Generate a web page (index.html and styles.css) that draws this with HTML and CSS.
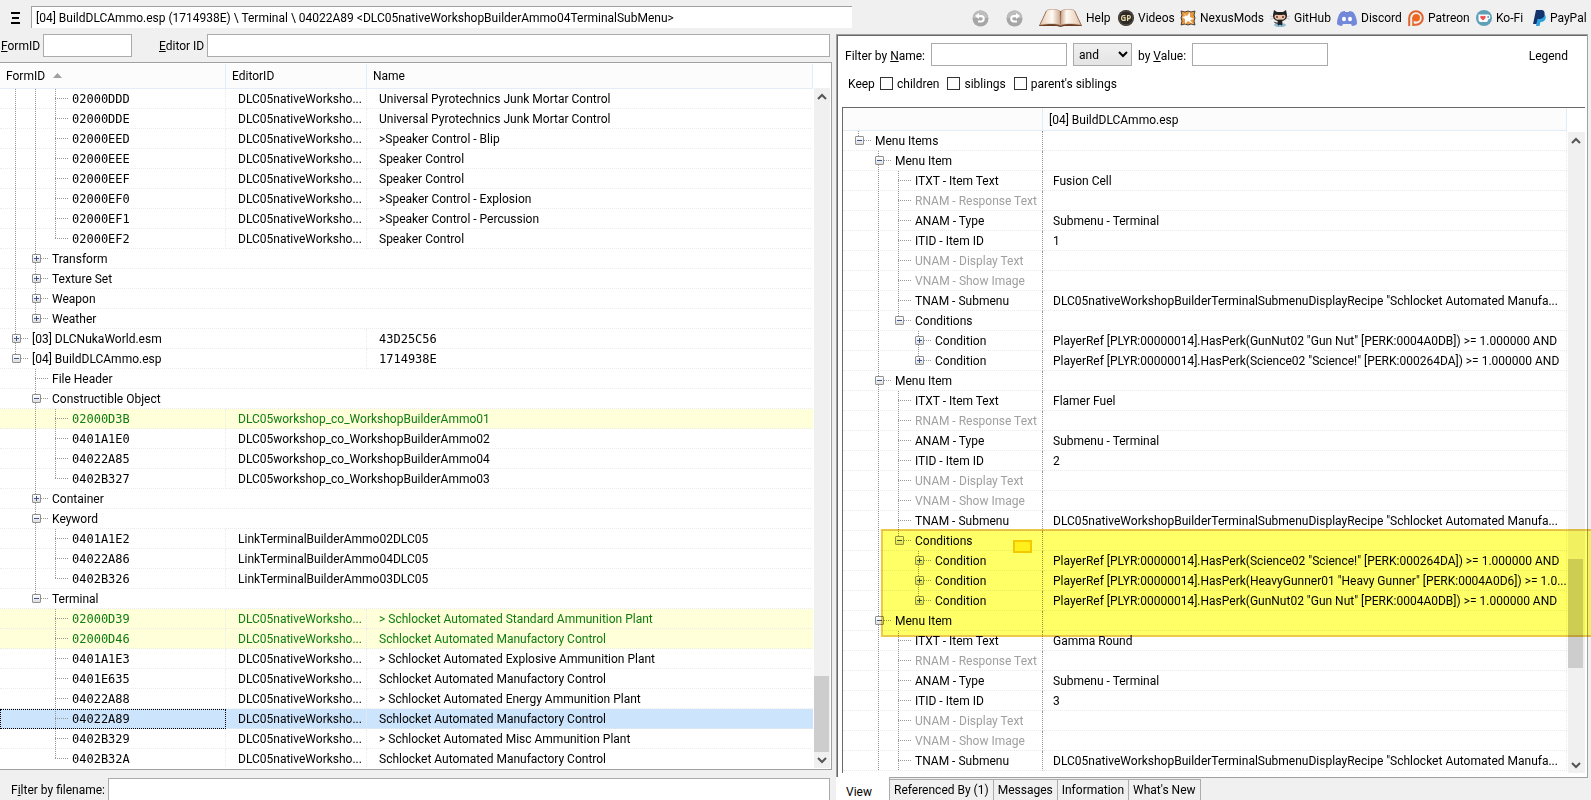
FILE: index.html
```html
<!DOCTYPE html>
<html lang="en">
<head>
<meta charset="utf-8">
<title>BuildDLCAmmo.esp</title>
<link rel="stylesheet" href="styles.css">
</head>
<body>
<header class="toolbar">
  <button class="menu" aria-label="Menu"><svg width="10" height="14" viewBox="0 0 10 14"><path d="M0 1h9v2H0zM1 6h7v2H1zM0 11h9v2H0z"/></svg></button>
  <input class="path" aria-label="Path" value="[04] BuildDLCAmmo.esp (1714938E) \ Terminal \ 04022A89 &lt;DLC05nativeWorkshopBuilderAmmo04TerminalSubMenu&gt;">
  <nav class="links">
    <button aria-label="Back"><svg width="17" height="17" viewBox="0 0 17 17"><circle cx="8.500" cy="8.500" r="8" fill="#a6a6a6"/><path d="M1 8a7.500 7.500 0 0 1 15 0z" fill="#bdbdbd"/><path d="M6 6h3a2.700 2.700 0 0 1 0 5.500H6" fill="none" stroke="#fff" stroke-width="2"/><path d="M3 6l4-3v6z" fill="#fff"/></svg></button>
    <button aria-label="Forward"><svg width="17" height="17" viewBox="0 0 17 17"><circle cx="8.500" cy="8.500" r="8" fill="#a6a6a6"/><path d="M1 8a7.500 7.500 0 0 1 15 0z" fill="#bdbdbd"/><path d="M11 6H8a2.700 2.700 0 0 0 0 5.500h3" fill="none" stroke="#fff" stroke-width="2"/><path d="M14 6l-4-3v6z" fill="#fff"/></svg></button>
    <a href="#help"><svg width="43" height="18" viewBox="0 0 43 18"><defs><linearGradient id="pl"><stop offset="0" stop-color="#e5cbb5"/><stop offset=".6" stop-color="#fffaf4"/><stop offset="1" stop-color="#c9a58a"/></linearGradient><linearGradient id="pr"><stop offset="0" stop-color="#c9a58a"/><stop offset=".3" stop-color="#fffaf4"/><stop offset="1" stop-color="#e2c4aa"/></linearGradient></defs><path d="M7 2L0 17h18l3.500 1L25 17h18L36 2l-3 0H10z" fill="#6b3c22"/><path d="M8 1C13 0 18 0 21 2l.5 14.500C16 14 8 15 1 16z" fill="url(#pl)" stroke="#a67c5e" stroke-width=".5"/><path d="M35 1C30 0 25 0 22 2l-.5 14.500C27 14 35 15 42 16z" fill="url(#pr)" stroke="#a67c5e" stroke-width=".5"/></svg>Help</a>
    <a href="#videos"><svg width="16" height="16" viewBox="0 0 16 16"><circle cx="8" cy="8" r="8" fill="#2d2926"/><circle cx="8" cy="8" r="7" fill="none" stroke="#5b5148"/><text x="8" y="11" text-anchor="middle" class="gp">GP</text></svg>Videos</a>
    <a href="#nexus"><svg width="16" height="16" viewBox="0 0 16 16"><path d="M1 1l4 1 3-1 3 1 4-1-1 4 1 3-1 3 1 4-4-1-3 1-3-1-4 1 1-4-1-3 1-3z" fill="#e99a40" stroke="#4a4038" stroke-width="1"/><path d="M3 3l4 3 3-4 0 5 4 2-4 1 3 4-5-3-3 3 0-5-3-2 4-1z" fill="#fff"/></svg>NexusMods</a>
    <a href="#github"><svg width="20" height="17" viewBox="0 0 20 17"><ellipse cx="10" cy="15" rx="6" ry="2" fill="#8fbdd0"/><path d="M0 6l5 1M0 9l5-1M20 6l-5 1M20 9l-5-1" stroke="#b9b9b9" stroke-width=".7"/><path d="M4 0l3 2h6l3-2 1 5c0 4-2 6-7 6S3 9 3 5z" fill="#222"/><path d="M4.500 6C5 4 8 5 10 5s5-1 5.500 1c0 3-2 4-5.500 4S4.500 9 4.500 6z" fill="#eec1a7"/><path d="M7 6v2M13 6v2" stroke="#633" stroke-width="1.500"/><path d="M8 10h4v5h-1l-1-1-1 1H8zM8 13c-3 1-3-1-4-1" fill="#222" stroke="#222" stroke-width=".7"/></svg>GitHub</a>
    <a href="#discord"><svg width="20" height="16" viewBox="0 0 20 16"><path d="M4 2C6 1 7 1 8 1v1h4V1c1 0 2 0 4 1 3 3 4 8 4 12-1 1-3 2-5 2l-1-2H6l-1 2c-2 0-4-1-5-2C0 10 1 5 4 2z" fill="#7289da"/><ellipse cx="7" cy="9" rx="2" ry="2.200" fill="#fff"/><ellipse cx="13" cy="9" rx="2" ry="2.200" fill="#fff"/></svg>Discord</a>
    <a href="#patreon"><svg width="16" height="16" viewBox="0 0 16 16"><path d="M1.200 16V8a6.800 6.800 0 1 1 6.800 6.800H5" fill="none" stroke="#e0642b" stroke-width="2"/><circle cx="8.300" cy="7.700" r="3.700" fill="#f1661d"/><path d="M5 7v9" stroke="#e0642b" stroke-width="1.500"/></svg>Patreon</a>
    <a href="#kofi"><svg width="16" height="16" viewBox="0 0 16 16"><circle cx="8" cy="8" r="8" fill="#5f9fb8"/><path d="M2.500 4.500H12c3 0 3 5 0 5 0 2-1 2.500-2 2.500H5c-2 0-2.500-1-2.500-3z" fill="#fff"/><circle cx="12.200" cy="7" r="1" fill="#5f9fb8"/><path d="M7 10.500L4.500 8C3.500 6 6 5 7 6.500 8 5 10.500 6 9.500 8z" fill="#f0504d"/></svg>Ko-Fi</a>
    <a href="#paypal"><svg width="13" height="16" viewBox="0 0 13 16"><path d="M5 4h6c2 1 2 3 1.500 5-1 2-2 3-5 3l-1 4H3z" fill="#2aa1dc"/><path d="M3 0h5c3 0 4 2 3.500 4.500C11 8 9 9 6 9H4.500L3.500 14H0z" fill="#14346f"/></svg>PayPal</a>
  </nav>
</header>
<main class="workspace">
<section class="left">
  <form class="ids">
    <label for="formid"><u>F</u>ormID</label><input id="formid">
    <label for="edid" class="edid"><u>E</u>ditor ID</label><input id="edid">
  </form>
  <div class="frame records">
    <div class="view">
      <table>
        <colgroup><col class="c-id"><col class="c-ed"><col></colgroup>
        <thead><tr><th>FormID<svg class="sort" width="9" height="5" viewBox="0 0 9 5"><path d="M0 5l4.500-5L9 5z"/></svg></th><th>EditorID</th><th>Name</th></tr></thead>
        <tbody>
        <tr><td><div class="tree id"><i class="g"></i><i class="g"></i><i class="t"></i>02000DDD</div></td><td>DLC05nativeWorksho...</td><td>Universal Pyrotechnics Junk Mortar Control</td></tr>
        <tr><td><div class="tree id"><i class="g"></i><i class="g"></i><i class="t"></i>02000DDE</div></td><td>DLC05nativeWorksho...</td><td>Universal Pyrotechnics Junk Mortar Control</td></tr>
        <tr><td><div class="tree id"><i class="g"></i><i class="g"></i><i class="t"></i>02000EED</div></td><td>DLC05nativeWorksho...</td><td>&gt;Speaker Control - Blip</td></tr>
        <tr><td><div class="tree id"><i class="g"></i><i class="g"></i><i class="t"></i>02000EEE</div></td><td>DLC05nativeWorksho...</td><td>Speaker Control</td></tr>
        <tr><td><div class="tree id"><i class="g"></i><i class="g"></i><i class="t"></i>02000EEF</div></td><td>DLC05nativeWorksho...</td><td>Speaker Control</td></tr>
        <tr><td><div class="tree id"><i class="g"></i><i class="g"></i><i class="t"></i>02000EF0</div></td><td>DLC05nativeWorksho...</td><td>&gt;Speaker Control - Explosion</td></tr>
        <tr><td><div class="tree id"><i class="g"></i><i class="g"></i><i class="t"></i>02000EF1</div></td><td>DLC05nativeWorksho...</td><td>&gt;Speaker Control - Percussion</td></tr>
        <tr><td><div class="tree id"><i class="g"></i><i class="g"></i><i class="t l"></i>02000EF2</div></td><td>DLC05nativeWorksho...</td><td>Speaker Control</td></tr>
        <tr><td colspan="3"><div class="tree"><i class="g"></i><i class="t"><button class="plus" aria-label="Expand"></button></i>Transform</div></td></tr>
        <tr><td colspan="3"><div class="tree"><i class="g"></i><i class="t"><button class="plus" aria-label="Expand"></button></i>Texture Set</div></td></tr>
        <tr><td colspan="3"><div class="tree"><i class="g"></i><i class="t"><button class="plus" aria-label="Expand"></button></i>Weapon</div></td></tr>
        <tr><td colspan="3"><div class="tree"><i class="g"></i><i class="t l"><button class="plus" aria-label="Expand"></button></i>Weather</div></td></tr>
        <tr><td colspan="2"><div class="tree"><i class="t"><button class="plus" aria-label="Expand"></button></i>[03] DLCNukaWorld.esm</div></td><td class="id">43D25C56</td></tr>
        <tr><td colspan="2"><div class="tree"><i class="t l"><button class="minus" aria-label="Collapse"></button></i>[04] BuildDLCAmmo.esp</div></td><td class="id">1714938E</td></tr>
        <tr><td colspan="3"><div class="tree"><i></i><i class="t"></i>File Header</div></td></tr>
        <tr><td colspan="3"><div class="tree"><i></i><i class="t"><button class="minus" aria-label="Collapse"></button></i>Constructible Object</div></td></tr>
        <tr class="changed"><td><div class="tree id"><i></i><i class="g"></i><i class="t"></i>02000D3B</div></td><td colspan="2">DLC05workshop_co_WorkshopBuilderAmmo01</td></tr>
        <tr><td><div class="tree id"><i></i><i class="g"></i><i class="t"></i>0401A1E0</div></td><td colspan="2">DLC05workshop_co_WorkshopBuilderAmmo02</td></tr>
        <tr><td><div class="tree id"><i></i><i class="g"></i><i class="t"></i>04022A85</div></td><td colspan="2">DLC05workshop_co_WorkshopBuilderAmmo04</td></tr>
        <tr><td><div class="tree id"><i></i><i class="g"></i><i class="t l"></i>0402B327</div></td><td colspan="2">DLC05workshop_co_WorkshopBuilderAmmo03</td></tr>
        <tr><td colspan="3"><div class="tree"><i></i><i class="t"><button class="plus" aria-label="Expand"></button></i>Container</div></td></tr>
        <tr><td colspan="3"><div class="tree"><i></i><i class="t"><button class="minus" aria-label="Collapse"></button></i>Keyword</div></td></tr>
        <tr><td><div class="tree id"><i></i><i class="g"></i><i class="t"></i>0401A1E2</div></td><td colspan="2">LinkTerminalBuilderAmmo02DLC05</td></tr>
        <tr><td><div class="tree id"><i></i><i class="g"></i><i class="t"></i>04022A86</div></td><td colspan="2">LinkTerminalBuilderAmmo04DLC05</td></tr>
        <tr><td><div class="tree id"><i></i><i class="g"></i><i class="t l"></i>0402B326</div></td><td colspan="2">LinkTerminalBuilderAmmo03DLC05</td></tr>
        <tr><td colspan="3"><div class="tree"><i></i><i class="t l"><button class="minus" aria-label="Collapse"></button></i>Terminal</div></td></tr>
        <tr class="changed"><td><div class="tree id"><i></i><i></i><i class="t"></i>02000D39</div></td><td>DLC05nativeWorksho...</td><td>&gt; Schlocket Automated Standard Ammunition Plant</td></tr>
        <tr class="changed"><td><div class="tree id"><i></i><i></i><i class="t"></i>02000D46</div></td><td>DLC05nativeWorksho...</td><td>Schlocket Automated Manufactory Control</td></tr>
        <tr><td><div class="tree id"><i></i><i></i><i class="t"></i>0401A1E3</div></td><td>DLC05nativeWorksho...</td><td>&gt; Schlocket Automated Explosive Ammunition Plant</td></tr>
        <tr><td><div class="tree id"><i></i><i></i><i class="t"></i>0401E635</div></td><td>DLC05nativeWorksho...</td><td>Schlocket Automated Manufactory Control</td></tr>
        <tr><td><div class="tree id"><i></i><i></i><i class="t"></i>04022A88</div></td><td>DLC05nativeWorksho...</td><td>&gt; Schlocket Automated Energy Ammunition Plant</td></tr>
        <tr class="selected"><td><div class="tree id"><i></i><i></i><i class="t"></i>04022A89</div></td><td>DLC05nativeWorksho...</td><td>Schlocket Automated Manufactory Control</td></tr>
        <tr><td><div class="tree id"><i></i><i></i><i class="t"></i>0402B329</div></td><td>DLC05nativeWorksho...</td><td>&gt; Schlocket Automated Misc Ammunition Plant</td></tr>
        <tr><td><div class="tree id"><i></i><i></i><i class="t l"></i>0402B32A</div></td><td>DLC05nativeWorksho...</td><td>Schlocket Automated Manufactory Control</td></tr>
        </tbody>
      </table>
    </div>
    <div class="scroll">
      <svg width="16" height="20" viewBox="0 0 16 20"><path d="M4 11l4-4 4 4"/></svg>
      <div class="track"><div class="before"></div><div class="thumb"></div><div class="after"></div></div>
      <svg width="16" height="16" viewBox="0 0 16 16"><path d="M4 6l4 4 4-4"/></svg>
    </div>
  </div>
  <form class="filename">
    <label for="fname">F<u>i</u>lter by filename:</label><input id="fname">
  </form>
</section>
<section class="right">
  <div class="panel">
    <form class="filters">
      <div class="line">
        <label for="byname">Filter by <u>N</u>ame:</label><input id="byname">
        <select aria-label="Operator"><option>and</option></select>
        <label for="byvalue" class="val">by <u>V</u>alue:</label><input id="byvalue">
        <span class="legend">Legend</span>
      </div>
      <div class="keep">
        <span>Keep</span>
        <label><input type="checkbox">children</label>
        <label><input type="checkbox">siblings</label>
        <label><input type="checkbox">parent's siblings</label>
      </div>
    </form>
    <div class="frame fields">
      <div class="view">
        <table>
          <colgroup><col class="c-field"><col></colgroup>
          <thead><tr><th></th><th>[04] BuildDLCAmmo.esp</th></tr></thead>
          <tbody>
          <tr><td><div class="tree"><i class="t l"><button class="minus" aria-label="Collapse"></button></i>Menu Items</div></td><td></td></tr>
          <tr><td><div class="tree"><i></i><i class="t"><button class="minus" aria-label="Collapse"></button></i>Menu Item</div></td><td></td></tr>
          <tr><td><div class="tree"><i></i><i class="g"></i><i class="t"></i>ITXT - Item Text</div></td><td>Fusion Cell</td></tr>
          <tr class="unset"><td><div class="tree"><i></i><i class="g"></i><i class="t"></i>RNAM - Response Text</div></td><td></td></tr>
          <tr><td><div class="tree"><i></i><i class="g"></i><i class="t"></i>ANAM - Type</div></td><td>Submenu - Terminal</td></tr>
          <tr><td><div class="tree"><i></i><i class="g"></i><i class="t"></i>ITID - Item ID</div></td><td>1</td></tr>
          <tr class="unset"><td><div class="tree"><i></i><i class="g"></i><i class="t"></i>UNAM - Display Text</div></td><td></td></tr>
          <tr class="unset"><td><div class="tree"><i></i><i class="g"></i><i class="t"></i>VNAM - Show Image</div></td><td></td></tr>
          <tr><td><div class="tree"><i></i><i class="g"></i><i class="t"></i>TNAM - Submenu</div></td><td>DLC05nativeWorkshopBuilderTerminalSubmenuDisplayRecipe "Schlocket Automated Manufa...</td></tr>
          <tr><td><div class="tree"><i></i><i class="g"></i><i class="t l"><button class="minus" aria-label="Collapse"></button></i>Conditions</div></td><td></td></tr>
          <tr><td><div class="tree"><i></i><i class="g"></i><i></i><i class="t"><button class="plus" aria-label="Expand"></button></i>Condition</div></td><td>PlayerRef [PLYR:00000014].HasPerk(GunNut02 "Gun Nut" [PERK:0004A0DB]) &gt;= 1.000000 AND</td></tr>
          <tr><td><div class="tree"><i></i><i class="g"></i><i></i><i class="t l"><button class="plus" aria-label="Expand"></button></i>Condition</div></td><td>PlayerRef [PLYR:00000014].HasPerk(Science02 "Science!" [PERK:000264DA]) &gt;= 1.000000 AND</td></tr>
          <tr><td><div class="tree"><i></i><i class="t"><button class="minus" aria-label="Collapse"></button></i>Menu Item</div></td><td></td></tr>
          <tr><td><div class="tree"><i></i><i class="g"></i><i class="t"></i>ITXT - Item Text</div></td><td>Flamer Fuel</td></tr>
          <tr class="unset"><td><div class="tree"><i></i><i class="g"></i><i class="t"></i>RNAM - Response Text</div></td><td></td></tr>
          <tr><td><div class="tree"><i></i><i class="g"></i><i class="t"></i>ANAM - Type</div></td><td>Submenu - Terminal</td></tr>
          <tr><td><div class="tree"><i></i><i class="g"></i><i class="t"></i>ITID - Item ID</div></td><td>2</td></tr>
          <tr class="unset"><td><div class="tree"><i></i><i class="g"></i><i class="t"></i>UNAM - Display Text</div></td><td></td></tr>
          <tr class="unset"><td><div class="tree"><i></i><i class="g"></i><i class="t"></i>VNAM - Show Image</div></td><td></td></tr>
          <tr><td><div class="tree"><i></i><i class="g"></i><i class="t"></i>TNAM - Submenu</div></td><td>DLC05nativeWorkshopBuilderTerminalSubmenuDisplayRecipe "Schlocket Automated Manufa...</td></tr>
          <tr><td><div class="tree"><i></i><i class="g"></i><i class="t l"><button class="minus" aria-label="Collapse"></button></i>Conditions</div></td><td></td></tr>
          <tr><td><div class="tree"><i></i><i class="g"></i><i></i><i class="t"><button class="plus" aria-label="Expand"></button></i>Condition</div></td><td>PlayerRef [PLYR:00000014].HasPerk(Science02 "Science!" [PERK:000264DA]) &gt;= 1.000000 AND</td></tr>
          <tr><td><div class="tree"><i></i><i class="g"></i><i></i><i class="t"><button class="plus" aria-label="Expand"></button></i>Condition</div></td><td>PlayerRef [PLYR:00000014].HasPerk(HeavyGunner01 "Heavy Gunner" [PERK:0004A0D6]) &gt;= 1.0...</td></tr>
          <tr><td><div class="tree"><i></i><i class="g"></i><i></i><i class="t l"><button class="plus" aria-label="Expand"></button></i>Condition</div></td><td>PlayerRef [PLYR:00000014].HasPerk(GunNut02 "Gun Nut" [PERK:0004A0DB]) &gt;= 1.000000 AND</td></tr>
          <tr><td><div class="tree"><i></i><i class="t"><button class="minus" aria-label="Collapse"></button></i>Menu Item</div></td><td></td></tr>
          <tr><td><div class="tree"><i></i><i class="g"></i><i class="t"></i>ITXT - Item Text</div></td><td>Gamma Round</td></tr>
          <tr class="unset"><td><div class="tree"><i></i><i class="g"></i><i class="t"></i>RNAM - Response Text</div></td><td></td></tr>
          <tr><td><div class="tree"><i></i><i class="g"></i><i class="t"></i>ANAM - Type</div></td><td>Submenu - Terminal</td></tr>
          <tr><td><div class="tree"><i></i><i class="g"></i><i class="t"></i>ITID - Item ID</div></td><td>3</td></tr>
          <tr class="unset"><td><div class="tree"><i></i><i class="g"></i><i class="t"></i>UNAM - Display Text</div></td><td></td></tr>
          <tr class="unset"><td><div class="tree"><i></i><i class="g"></i><i class="t"></i>VNAM - Show Image</div></td><td></td></tr>
          <tr><td><div class="tree"><i></i><i class="g"></i><i class="t"></i>TNAM - Submenu</div></td><td>DLC05nativeWorkshopBuilderTerminalSubmenuDisplayRecipe "Schlocket Automated Manufa...</td></tr>
          </tbody>
        </table>
      </div>
      <div class="scroll">
        <svg width="16" height="20" viewBox="0 0 16 20"><path d="M4 11l4-4 4 4"/></svg>
        <div class="track"><div class="before"></div><div class="thumb"></div><div class="after"></div></div>
        <svg width="16" height="16" viewBox="0 0 16 16"><path d="M4 6l4 4 4-4"/></svg>
      </div>
    </div>
    <div class="marker"></div>
    <div class="marker small"></div>
  </div>
  <div class="tabs" role="tablist">
    <button role="tab" class="active" aria-selected="true">View</button>
    <button role="tab">Referenced By (1)</button>
    <button role="tab">Messages</button>
    <button role="tab">Information</button>
    <button role="tab">What's New</button>
  </div>
</section>
</main>
</body>
</html>
```

FILE: styles.css
```css
* { box-sizing: border-box; }
body {
  margin: 0;
  height: 100vh;
  overflow: hidden;
  display: flex;
  flex-direction: column;
  background: #f0f0f0;
  color: #000;
  font: 12px/16px Roboto, "Open Sans", sans-serif;
}
button, input, select { font: inherit; color: inherit; }
button { background: none; border: 0; padding: 0; }
a { color: inherit; text-decoration: none; }
input { background: #fff; border: 1px solid #ababab; border-radius: 0; padding: 0 4px; min-width: 0; outline: none; }
label, .keep, th, td, .tree { white-space: nowrap; }

/* toolbar */
.toolbar { flex: none; height: 34px; display: flex; align-items: flex-start; padding-top: 6px; }
.menu { width: 31px; height: 24px; line-height: 0; }
.path { flex: 1; height: 22px; border-width: 1px 0 0 1px; border-color: #a0a0a0; }
.links {
  flex: none;
  display: grid;
  grid-template-columns: 34px 33px 79px 62px 90px 67px 71px 68px 57px 58px;
  margin-left: 120px;
  height: 24px;
}
.links > * { display: flex; align-items: center; gap: 4px; white-space: nowrap; }
.gp { font: bold 8px "Open Sans", sans-serif; fill: #e8d9a8; }

/* split */
.workspace { flex: 1; min-height: 0; display: grid; grid-template-columns: minmax(0, 832fr) minmax(0, 752fr); column-gap: 4px; padding-right: 3px; }
.left, .right { min-height: 0; display: flex; flex-direction: column; }
.ids { flex: none; height: 28px; display: flex; align-items: flex-start; padding: 0 2px 0 1px; }
.ids label { line-height: 25px; width: 42px; }
.ids .edid { width: 48px; margin-left: 27px; }
.ids input { height: 23px; }
#formid { width: 89px; }
#edid { flex: 1; }

/* framed tree views */
.frame { flex: 1; min-height: 0; display: flex; background: #fff; }
.records { border: 1px solid #a0a0a0; border-left: 0; padding: 1px; padding-left: 0; }
.view { flex: 1; min-width: 0; overflow: hidden; }
table { width: 100%; table-layout: fixed; border-spacing: 0; }
.c-id { width: 226px; }
.c-ed { width: 141px; }
.c-field { width: 200px; }
th { height: 23px; padding: 1px 6px 0; text-align: left; font-weight: normal; background: #fcfcfc; border: solid #e3edf7; border-width: 0 1px 1px 0; }
.records th { height: 25px; padding-top: 0; }
td { height: 20px; padding: 2px 0 0 12px; border: dotted #ebebeb; border-width: 0 1px 1px 0; line-height: 17px; overflow: hidden; }
td:last-child { border-right-color: transparent; }
.fields td { padding-left: 10px; }
.fields td:first-child { border-right-color: #969696; }
.fields td:last-child { border-right-color: #ebebeb; }
td:has(.tree), .fields td:has(.tree) { padding: 0; }
.tree { display: flex; height: 19px; padding-left: 6px; line-height: 21px; }
.id { font-family: "DejaVu Sans Mono", monospace; }
.sort { margin: 0 0 2px 8px; fill: #a0a0a0; }
.changed { background: #ffffd9; color: #107c10; }
.selected { background: #cce4fc; }
.selected td:first-child { outline: 1px dotted #000; outline-offset: -1px; }
.unset { color: #a0a0a0; }

/* tree guides */
.tree i {
  --dash-v: repeating-linear-gradient(#969696 0 1px, transparent 1px 2px);
  --dash-h: repeating-linear-gradient(90deg, #969696 0 1px, transparent 1px 2px);
  flex: none;
  width: 20px;
  height: 20px;
  background-repeat: no-repeat;
}
.tree .g { background-image: var(--dash-v); background-size: 1px 20px; background-position: 9px 0; }
.tree .t { width: 26px; padding: 5px 0 0 6px; background-image: var(--dash-v), var(--dash-h); background-size: 1px 20px, 13px 1px; background-position: 9px 0, 9px 9px; }
.tree .l { background-size: 1px 10px, 13px 1px; }
.plus, .minus {
  display: block;
  width: 9px;
  height: 9px;
  border: 1px solid #919191;
  border-radius: 1px;
  background: linear-gradient(#3b5593, #3b5593) 1px 3px / 5px 1px no-repeat, linear-gradient(#fff, #dedede);
}
.plus { background: linear-gradient(#3b5593, #3b5593) 1px 3px / 5px 1px no-repeat, linear-gradient(#3b5593, #3b5593) 3px 1px / 1px 5px no-repeat, linear-gradient(#fff, #dedede); }

/* scrollbars */
.scroll { flex: none; width: 17px; padding: 24px 1px 0; display: flex; flex-direction: column; background: linear-gradient(#f0f0f0, #f0f0f0) 1px 24px no-repeat; }
.fields .scroll { width: 18px; }
.scroll svg { flex: none; fill: none; stroke: #555; stroke-width: 2; }
.track { flex: 1; display: flex; flex-direction: column; }
.thumb { background: #cdcdcd; width: 15px; }
.records .before { flex: 569; }
.records .thumb { flex: 76; }
.fields .before { flex: 408; }
.fields .thumb { flex: 110; }
.fields .after { flex: 89; }

.filename { flex: none; height: 30px; display: flex; padding: 8px 2px 0 11px; overflow: hidden; }
.filename label { width: 97px; line-height: 25px; }
.filename input { flex: 1; height: 24px; }

/* right panel */
.panel { flex: 1; min-height: 0; position: relative; display: flex; flex-direction: column; background: #fff; border: 1px solid #a0a0a0; box-shadow: inset 1px 1px #696969; padding: 8px 2px 4px 5px; }
.filters { flex: none; height: 64px; }
.line { display: flex; height: 23px; line-height: 26px; padding-left: 3px; padding-right: 17px; }
.line label { width: 86px; }
.line input { width: 136px; }
.line select { width: 59px; margin: 0 6px; padding: 0 0 0 1px; border: 1px solid #ababab; border-radius: 0; background: linear-gradient(#f0f0f0, #e4e4e4); }
.line .val { width: 54px; }
.legend { margin-left: auto; }
.keep { display: flex; padding: 10px 0 0 6px; }
.keep span { width: 32px; }
.keep label { display: flex; gap: 4px; margin-right: 8px; }
.keep input { appearance: none; width: 13px; height: 13px; margin: 1px 0 0; padding: 0; border: 1px solid #333; }
.fields { border: solid #696969; border-width: 1px 0 0 1px; }
.marker { position: absolute; left: 44px; right: -4px; top: 494px; height: 108px; background: #ff6; border: 2px solid #ecc94a; border-right: 0; mix-blend-mode: multiply; }
.marker.small { left: 176px; right: auto; top: 505px; width: 19px; height: 13px; background: #fff01c; border: 2px solid #f5c800; mix-blend-mode: normal; }

/* page tabs */
.tabs { flex: none; height: 22px; display: flex; align-items: flex-start; padding-top: 1px; }
.tabs button { height: 22px; border: 1px solid #acacac; border-left-width: 0; padding: 0 4px; }
.tabs .active { height: 25px; width: 54px; margin-top: -2px; padding: 4px 0 0 10px; text-align: left; background: #fff; border-width: 0 1px 0 0; position: relative; }
```
